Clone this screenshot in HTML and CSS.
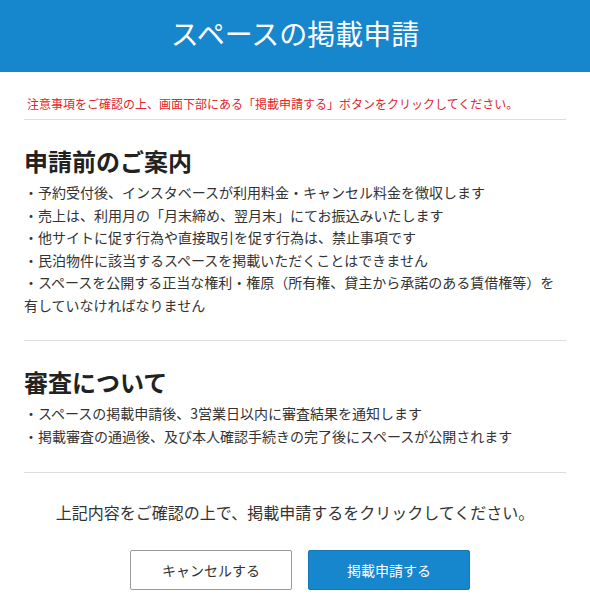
FILE: index.html
```html
<!DOCTYPE html>
<html lang="ja">

<head>
  <meta charset="utf-8">
  <title>スペースの掲載申請</title>
  <link rel="stylesheet" href="styles.css">
</head>

<body>
  <header class="pageHeader">
    <h1>スペースの掲載申請</h1>
  </header>
  <main class="content">
    <p class="notice">注意事項をご確認の上、画面下部にある「掲載申請する」ボタンをクリックしてください。</p>

    <section class="block">
      <h2>申請前のご案内</h2>
      <ul class="dotList">
        <li>・予約受付後、インスタベースが利用料金・キャンセル料金を徴収します</li>
        <li>・売上は、利用月の「月末締め、翌月末」にてお振込みいたします</li>
        <li>・他サイトに促す行為や直接取引を促す行為は、禁止事項です</li>
        <li>・民泊物件に該当するスペースを掲載いただくことはできません</li>
        <li>・スペースを公開する正当な権利・権原（所有権、貸主から承諾のある賃借権等）を有していなければなりません</li>
      </ul>
    </section>

    <section class="block">
      <h2>審査について</h2>
      <ul class="dotList">
        <li>・スペースの掲載申請後、3営業日以内に審査結果を通知します</li>
        <li>・掲載審査の通過後、及び本人確認手続きの完了後にスペースが公開されます</li>
      </ul>
    </section>

    <p class="confirmText">上記内容をご確認の上で、掲載申請するをクリックしてください。</p>
    <div class="actions">
      <button class="btn btnCancel" type="button">キャンセルする</button>
      <button class="btn btnSubmit" type="button">掲載申請する</button>
    </div>
  </main>
</body>

</html>
```

FILE: styles.css
```css
* {
    box-sizing: border-box;
}

body {
    margin: 0;
    background-color: white;
    color: #333;
    font-family: "Noto Sans CJK JP", "Noto Sans", sans-serif;
}

.pageHeader {
    height: 72px;
    padding-top: 13px;
    background-color: #1686cd;
    text-align: center;
}

.pageHeader h1 {
    margin: 0;
    color: white;
    font-size: 28px;
    line-height: 40px;
    font-weight: normal;
}

.content {
    padding: 0 24px;
}

.notice {
    margin: 0;
    padding: 23px 0 6px 3px;
    color: #e0262e;
    font-size: 12px;
    line-height: 18px;
    border-bottom: 1px solid #ddd;
}

.block {
    padding: 23px 0 24px;
    border-bottom: 1px solid #ddd;
}

.block:last-of-type {
    padding-bottom: 25px;
}

.block h2 {
    margin: 0 0 2px;
    color: #222;
    font-size: 24px;
    line-height: 36px;
    font-weight: bold;
}

.dotList {
    list-style: none;
    margin: 0;
    padding: 0;
    font-size: 14px;
    line-height: 22.5px;
}

.confirmText {
    margin: 27px 0 0;
    text-align: center;
    font-size: 16px;
    line-height: 24px;
}

.actions {
    display: flex;
    justify-content: center;
    gap: 16px;
    margin-top: 26px;
    padding-left: 10px;
}

.btn {
    width: 162px;
    height: 40px;
    border-radius: 2px;
    font-family: inherit;
    font-size: 14px;
    cursor: pointer;
}

.btnCancel {
    background-color: white;
    border: 1px solid #999;
    color: #333;
}

.btnSubmit {
    background-color: #1686cd;
    border: 1px solid #1278b8;
    color: white;
}
```
